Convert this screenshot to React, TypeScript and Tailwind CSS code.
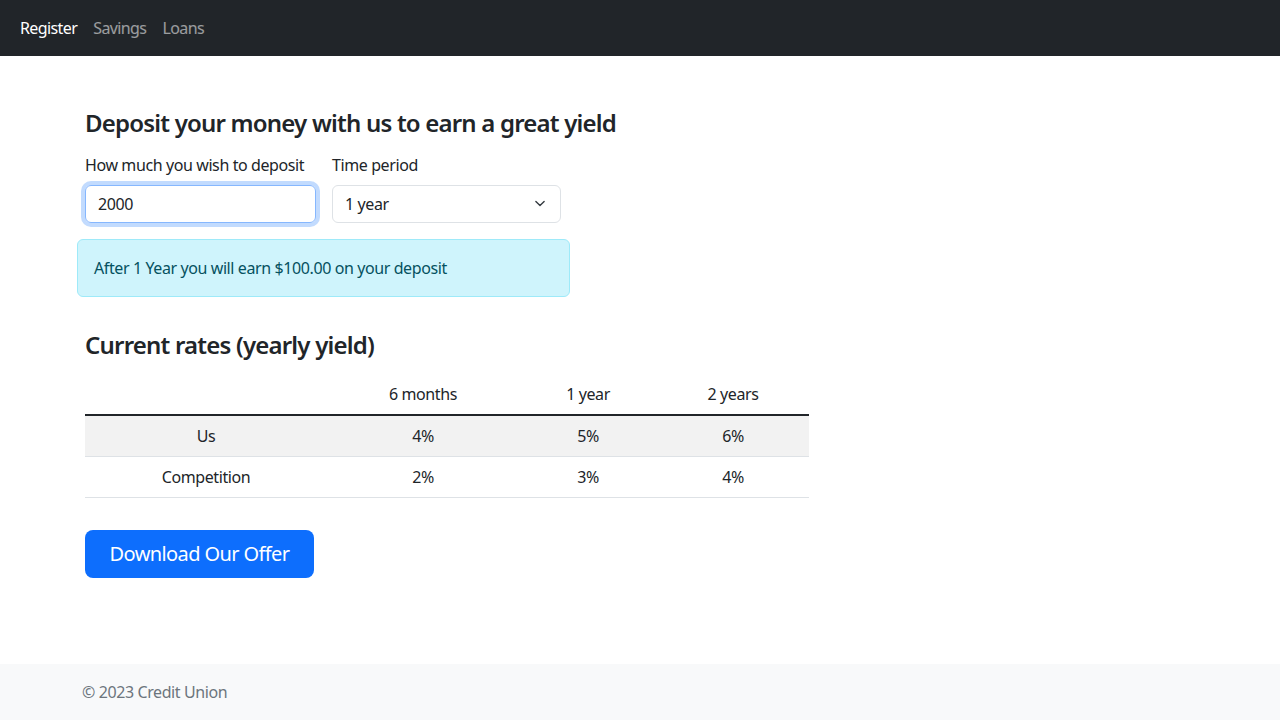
import { useState } from 'react'

const rates = [
  { name: 'Us', values: ['4%', '5%', '6%'] },
  { name: 'Competition', values: ['2%', '3%', '4%'] },
]

export default function App() {
  const [amount, setAmount] = useState('2000')
  const [period, setPeriod] = useState('1')

  return (
    <div className="min-h-[720px] flex flex-col bg-white text-[#212529] font-['Noto_Sans',sans-serif] text-base tracking-[-0.4px]">
      {/* navbar */}
      <nav className="h-14 bg-[#212529] flex items-center px-3 tracking-[-0.6px]">
        <a className="px-2 text-white">Register</a>
        <a className="px-2 text-white/55">Savings</a>
        <a className="px-2 text-white/55">Loans</a>
      </nav>

      <main className="flex-1 pl-[85px] pt-[52px]">
        <h4 className="text-2xl font-semibold leading-[29px] mb-4 tracking-[-0.8px]">Deposit your money with us to earn a great yield</h4>

        <div className="flex gap-4">
          <div className="w-[231px]">
            <label className="block leading-6 mb-2">How much you wish to deposit</label>
            <input
              value={amount}
              onChange={(e) => setAmount(e.target.value)}
              className="w-full h-[38px] px-3 rounded-md border border-[#86b7fe] shadow-[0_0_0_4px_rgba(13,110,253,0.25)] outline-none"
            />
          </div>
          <div className="w-[229px]">
            <label className="block leading-6 mb-2">Time period</label>
            <div className="relative">
              <select
                value={period}
                onChange={(e) => setPeriod(e.target.value)}
                className="appearance-none w-full h-[38px] pl-3 pr-9 rounded-md border border-[#dee2e6] bg-white outline-none"
              >
                <option value="0.5">6 months</option>
                <option value="1">1 year</option>
                <option value="2">2 years</option>
              </select>
              <svg className="absolute right-[14px] top-[13px] pointer-events-none" width="14" height="11" viewBox="0 0 16 16">
                <path d="m2 5 6 6 6-6" fill="none" stroke="#343a40" strokeWidth="2" strokeLinecap="round" strokeLinejoin="round" />
              </svg>
            </div>
          </div>
        </div>

        <div className="-ml-2 mt-4 w-[493px] h-[58px] rounded-md border border-[#9eeaf9] bg-[#cff4fc] text-[#055160] px-4 flex items-center">
          After 1 Year you will earn $100.00 on your deposit
        </div>

        <h4 className="text-2xl font-semibold leading-[29px] mt-[33px] mb-[15px] tracking-[-0.8px]">Current rates (yearly yield)</h4>

        <table className="w-[724px] text-center border-collapse">
          <thead>
            <tr className="h-[41px] border-b-2 border-[#212529]">
              <th className="w-[242px] font-normal"></th>
              <th className="w-[192px] font-normal">6 months</th>
              <th className="w-[138px] font-normal">1 year</th>
              <th className="w-[152px] font-normal">2 years</th>
            </tr>
          </thead>
          <tbody>
            {rates.map((r, i) => (
              <tr key={r.name} className={`h-[41px] border-b border-[#dee2e6] ${i === 0 ? 'bg-[#f2f2f2]' : ''}`}>
                <td>{r.name}</td>
                {r.values.map((v, j) => (
                  <td key={j}>{v}</td>
                ))}
              </tr>
            ))}
          </tbody>
        </table>

        <button className="mt-8 w-[229px] h-12 rounded-lg bg-[#0d6efd] text-white text-xl tracking-[-0.6px]">Download Our Offer</button>
      </main>

      <footer className="h-14 bg-[#f8f9fa] flex items-center pl-[82px] text-[#6c757d]">© 2023 Credit Union</footer>
    </div>
  )
}
